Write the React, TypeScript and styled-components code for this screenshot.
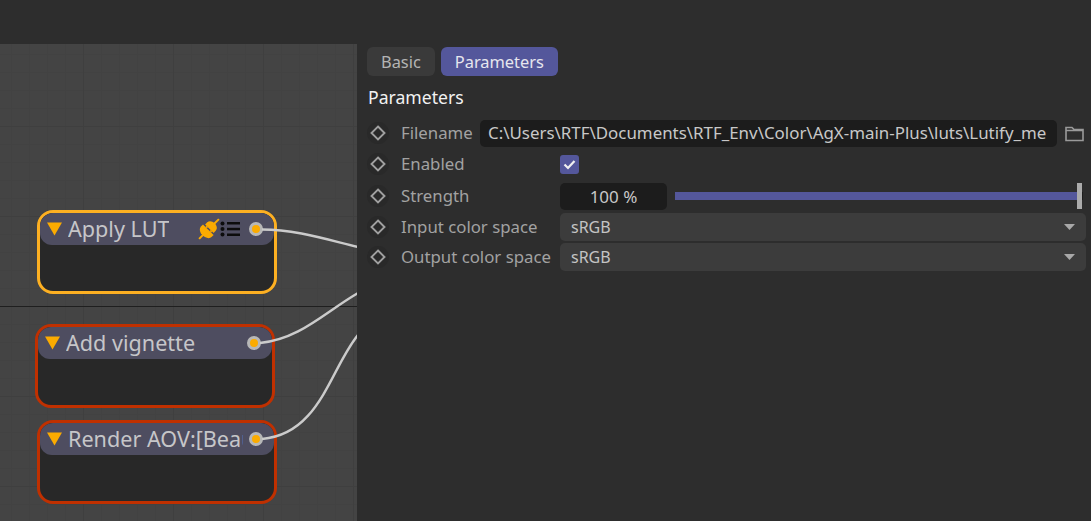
import React from "react";
import styled, { createGlobalStyle } from "styled-components";

const Global = createGlobalStyle`
  html, body { margin: 0; padding: 0; background: #2d2d2d; }
  #root { width: 1091px; height: 521px; overflow: hidden; }
  * { box-sizing: border-box; }
`;

const Page = styled.div`
  width: 1091px;
  height: 521px;
  display: flex;
  flex-direction: column;
  background: #2d2d2d;
  font-family: "Noto Sans", "Open Sans", sans-serif;
`;
const TopBar = styled.div`
  height: 44px;
  flex: none;
  background: #2d2d2d;
`;
const Main = styled.div`
  flex: 1;
  display: flex;
  min-height: 0;
`;
const Canvas = styled.div`
  position: relative;
  width: 357px;
  flex: none;
  overflow: hidden;
  background-color: #444444;
  background-image:
    linear-gradient(to right, #3f3f3f 1px, transparent 1px),
    linear-gradient(to bottom, #3f3f3f 1px, transparent 1px),
    linear-gradient(to right, #424242 1px, transparent 1px),
    linear-gradient(to bottom, #424242 1px, transparent 1px);
  background-size: 90px 90px, 90px 90px, 18px 18px, 18px 18px;
  background-position: 83px 0, 0 82px, 11px 0, 0 10px;
`;
const SplitLine = styled.div`
  position: absolute;
  left: 0;
  right: 0;
  top: 262px;
  height: 1px;
  background: #1f1f1f;
`;
const Wires = styled.svg`
  position: absolute;
  left: 0;
  top: 0;
  width: 357px;
  height: 477px;
  pointer-events: none;
  z-index: 2;
`;
const NodeBox = styled.div<{ $x: number; $y: number; $color: string }>`
  position: absolute;
  left: ${(p) => p.$x}px;
  top: ${(p) => p.$y}px;
  width: 240px;
  height: 84px;
  border: 3px solid ${(p) => p.$color};
  border-radius: 16px;
  background: #282828;
  overflow: hidden;
`;
const NodeHeader = styled.div`
  position: relative;
  height: 32px;
  padding-left: 7px;
  display: flex;
  align-items: center;
  background: #4e4d60;
  border-radius: 12px;
`;
const Collapse = styled.svg`
  width: 15px;
  height: 14px;
  flex: none;
  margin-right: 6px;
`;
const NodeTitle = styled.div<{ $width?: number }>`
  font-size: 21.6px;
  line-height: 30px;
  color: #c6c6c9;
  white-space: nowrap;
  overflow: hidden;
  ${(p) => (p.$width ? `width: ${p.$width}px;` : "")}
`;
const Tools = styled.div`
  position: absolute;
  left: 158px;
  top: 5px;
  display: flex;
  align-items: center;
`;
const Port = styled.div`
  position: absolute;
  right: 11px;
  top: 9px;
  width: 14px;
  height: 14px;
  border-radius: 50%;
  border: 3px solid #b7b7b7;
  background: #fbab00;
`;
const Panel = styled.div`
  flex: 1;
  background: #2d2d2d;
  padding: 3px 5px 0 10px;
  min-width: 0;
  display: flex;
  flex-direction: column;
`;
const Tabs = styled.div`
  display: flex;
  gap: 6px;
`;
const Tab = styled.div<{ $active?: boolean }>`
  height: 29px;
  padding: 0 14px;
  border-radius: 6px;
  display: flex;
  align-items: center;
  font-size: 16.4px;
  color: ${(p) => (p.$active ? "#e6e6ee" : "#b4b4b4")};
  background: ${(p) => (p.$active ? "#54579b" : "#3a3a3a")};
`;
const Heading = styled.div`
  margin: 8px 0 0 1px;
  font-size: 17.6px;
  line-height: 26px;
  color: #f2f2f2;
`;
const Rows = styled.div`
  margin-top: 8px;
  display: flex;
  flex-direction: column;
`;
const Row = styled.div<{ $h: number }>`
  height: ${(p) => p.$h}px;
  display: flex;
  align-items: center;
`;
const Key = styled.div`
  width: 22px;
  height: 22px;
  flex: none;
  border-radius: 50%;
  background: #292929;
  display: flex;
  align-items: center;
  justify-content: center;
`;
const Label = styled.div`
  width: 159px;
  margin: 0 0 2px 12px;
  font-size: 16.8px;
  color: #a2a2a2;
  white-space: nowrap;
  flex: none;
`;
const PathField = styled.div`
  width: 577px;
  height: 27px;
  margin-left: -80px;
  border-radius: 5px;
  background: #1c1c1c;
  color: #c8c8c8;
  font-size: 16.9px;
  line-height: 26px;
  padding: 0 8px;
  overflow: hidden;
  white-space: nowrap;
`;
const FolderBtn = styled.svg`
  width: 19px;
  height: 17px;
  margin-left: 8px;
  flex: none;
`;
const Check = styled.div`
  width: 19px;
  height: 19px;
  border-radius: 3px;
  background: #54579b;
  display: flex;
  align-items: center;
  justify-content: center;
`;
const NumberField = styled.div`
  width: 107px;
  height: 27px;
  border-radius: 5px;
  background: #1c1c1c;
  color: #c8c8c8;
  font-size: 17px;
  display: flex;
  align-items: center;
  justify-content: center;
`;
const Slider = styled.div`
  position: relative;
  width: 408px;
  height: 8px;
  margin-left: 8px;
  background: #1c1c1c;
`;
const SliderFill = styled.div`
  height: 100%;
  background: #54579b;
`;
const SliderHandle = styled.div`
  position: absolute;
  top: -9px;
  right: 1px;
  width: 5px;
  height: 26px;
  background: #ababab;
`;
const Select = styled.div`
  width: 526px;
  height: 28px;
  border-radius: 5px;
  background: #3c3c3c;
  color: #c4c4c4;
  font-size: 16px;
  padding: 0 11px;
  display: flex;
  align-items: center;
  justify-content: space-between;
`;
const Caret = styled.svg`
  width: 11px;
  height: 6px;
`;

const Arrow = () => (
  <Collapse viewBox="0 0 15 14">
    <path d="M0 0.500H15L7.500 13.500Z" fill="#fbab00" />
  </Collapse>
);

const Diamond = () => (
  <svg width="16" height="16" viewBox="0 0 16 16">
    <path d="M8 1.500L14.500 8L8 14.500L1.500 8Z" fill="none" stroke="#a0a0a0" strokeWidth="1.900" />
  </svg>
);

const PlugIcon = () => (
  <svg width="22" height="22" viewBox="0 0 22 22">
    <g fill="#fbab00" transform="rotate(-45 11 11)">
      <rect x="-3" y="10" width="6" height="2" />
      <path d="M10 3.500H7.500C4 3.500 2 7 2 11S4 18.500 7.500 18.500H10Z" />
      <rect x="10" y="7" width="1.500" height="2" />
      <rect x="10" y="13" width="1.500" height="2" />
      <path d="M11.500 5H14.500C17.500 5 19 8 19 11S17.500 17 14.500 17H11.500Z" />
      <rect x="18" y="10" width="7" height="2" />
    </g>
  </svg>
);

const ListIcon = () => (
  <svg width="21" height="16" viewBox="0 0 21 16">
    <g fill="#0c0c0c">
      <circle cx="2.5" cy="2.5" r="2" />
      <circle cx="2.5" cy="8" r="2" />
      <circle cx="2.5" cy="13.5" r="2" />
      <rect x="7" y="1" width="13" height="2.5" />
      <rect x="7" y="6.800" width="13" height="2.5" />
      <rect x="7" y="12.500" width="13" height="2.5" />
    </g>
  </svg>
);

const Node = ({
  x,
  y,
  color,
  title,
  titleWidth,
  tools,
}: {
  x: number;
  y: number;
  color: string;
  title: string;
  titleWidth?: number;
  tools?: boolean;
}) => (
  <NodeBox $x={x} $y={y} $color={color}>
    <NodeHeader>
      <Arrow />
      <NodeTitle $width={titleWidth}>{title}</NodeTitle>
      {tools && (
        <Tools>
          <PlugIcon />
          <ListIcon />
        </Tools>
      )}
      <Port />
    </NodeHeader>
  </NodeBox>
);

const Param = ({ h, label, children }: { h: number; label: string; children: React.ReactNode }) => (
  <Row $h={h}>
    <Key>
      <Diamond />
    </Key>
    <Label>{label}</Label>
    {children}
  </Row>
);

export default function App() {
  return (
    <Page>
      <Global />
      <TopBar />
      <Main>
        <Canvas>
          <SplitLine />
          <Node x={37} y={166} color="#fdb022" title="Apply LUT" tools />
          <Node x={35} y={280} color="#c03000" title="Add vignette" />
          <Node x={37} y={376} color="#c03000" title="Render AOV:[Beauty]" titleWidth={175} />
          <Wires viewBox="0 0 357 477">
            <g fill="none" stroke="#cbcbcb" strokeWidth="2.4">
              <path d="M262 185.500C295 185.500 325 195 358 203" />
              <path d="M260 299C300 295 325 268 358 249" />
              <path d="M262 395C320 390 330 325 358 291" />
            </g>
          </Wires>
        </Canvas>
        <Panel>
          <Tabs>
            <Tab>Basic</Tab>
            <Tab $active>Parameters</Tab>
          </Tabs>
          <Heading>Parameters</Heading>
          <Rows>
            <Param h={30} label="Filename">
              <PathField>C:\Users\RTF\Documents\RTF_Env\Color\AgX-main-Plus\luts\Lutify_me</PathField>
              <FolderBtn viewBox="0 0 19 17">
                <path
                  d="M1 15.500V2.500H7L9 4.500H18V15.500Z M1 5.500H18"
                  fill="none"
                  stroke="#9a9a9a"
                  strokeWidth="1.600"
                />
              </FolderBtn>
            </Param>
            <Param h={32} label="Enabled">
              <Check>
                <svg width="13" height="11" viewBox="0 0 13 11">
                  <path d="M1.500 5.500L5 9L11.500 2" fill="none" stroke="#f0f0f0" strokeWidth="2.200" />
                </svg>
              </Check>
            </Param>
            <Param h={32} label="Strength">
              <NumberField>100 %</NumberField>
              <Slider>
                <SliderFill style={{ width: `${(402 / 408) * 100}%` }} />
                <SliderHandle />
              </Slider>
            </Param>
            <Param h={30} label="Input color space">
              <Select>
                sRGB
                <Caret viewBox="0 0 11 6">
                  <path d="M0 0H11L5.500 6Z" fill="#a8a8a8" />
                </Caret>
              </Select>
            </Param>
            <Param h={30} label="Output color space">
              <Select>
                sRGB
                <Caret viewBox="0 0 11 6">
                  <path d="M0 0H11L5.500 6Z" fill="#a8a8a8" />
                </Caret>
              </Select>
            </Param>
          </Rows>
        </Panel>
      </Main>
    </Page>
  );
}
